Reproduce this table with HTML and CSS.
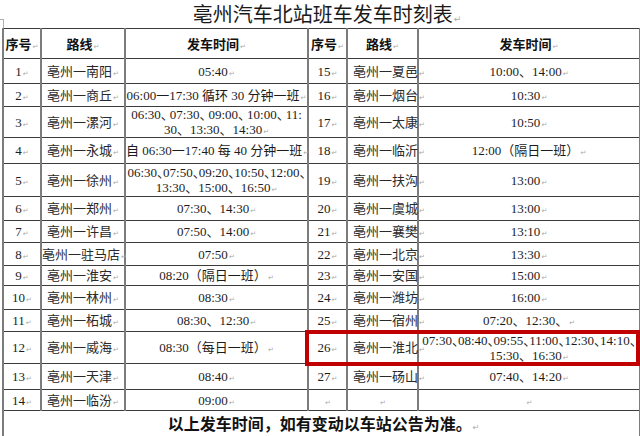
FILE: index.html
```html
<!DOCTYPE html>
<html lang="zh-CN">
<head>
<meta charset="utf-8">
<title>亳州汽车北站班车发车时刻表</title>
<link rel="stylesheet" href="styles.css">
</head>
<body>
<div class="page">
  <h1 class="title">亳州汽车北站班车发车时刻表<span class="pm">↵</span></h1>
  <div class="tablewrap">
    <table class="sched">
      <colgroup>
        <col class="w1"><col class="w2"><col class="w3"><col class="w4"><col class="w5"><col class="w6">
      </colgroup>
      <tr class="head">
        <th>序号<span class="pm">↵</span></th><th>路线<span class="pm">↵</span></th><th>发车时间<span class="pm">↵</span></th>
        <th>序号<span class="pm">↵</span></th><th>路线<span class="pm">↵</span></th><th>发车时间<span class="pm">↵</span></th>
      </tr>
      <tr>
        <td>1<span class="pm">↵</span></td><td class="rt">亳州一南阳<span class="pm">↵</span></td><td>05:40<span class="pm">↵</span></td>
        <td>15<span class="pm">↵</span></td><td class="rt rr">亳州一夏邑<span class="pm">↵</span></td><td>10:00、14:00<span class="pm">↵</span></td>
      </tr>
      <tr>
        <td>2<span class="pm">↵</span></td><td class="rt">亳州一商丘<span class="pm">↵</span></td><td>06:00一17:30 循环 30 分钟一班<span class="pm">↵</span></td>
        <td>16<span class="pm">↵</span></td><td class="rt rr">亳州一烟台<span class="pm">↵</span></td><td>10:30<span class="pm">↵</span></td>
      </tr>
      <tr>
        <td>3<span class="pm">↵</span></td><td class="rt">亳州一漯河<span class="pm">↵</span></td><td>06:30<span class="n2">、</span>07:30<span class="n2">、</span>09:00<span class="n2">、</span>10:00<span class="n2">、</span>11:<br>30、13:30、14:30<span class="pm">↵</span></td>
        <td>17<span class="pm">↵</span></td><td class="rt rr">亳州一太康<span class="pm">↵</span></td><td>10:50<span class="pm">↵</span></td>
      </tr>
      <tr>
        <td>4<span class="pm">↵</span></td><td class="rt">亳州一永城<span class="pm">↵</span></td><td>自 06:30一17:40 每 40 分钟一班<span class="pm">↵</span></td>
        <td>18<span class="pm">↵</span></td><td class="rt rr">亳州一临沂<span class="pm">↵</span></td><td>12:00（隔日一班）<span class="pm">↵</span></td>
      </tr>
      <tr>
        <td>5<span class="pm">↵</span></td><td class="rt">亳州一徐州<span class="pm">↵</span></td><td>06:30<span class="n1">、</span>07:50<span class="n1">、</span>09:20<span class="n1">、</span>10:50<span class="n1">、</span>12:00<span class="n1">、</span><br>13:30、15:00、16:50<span class="pm">↵</span></td>
        <td>19<span class="pm">↵</span></td><td class="rt rr">亳州一扶沟<span class="pm">↵</span></td><td>13:00<span class="pm">↵</span></td>
      </tr>
      <tr>
        <td>6<span class="pm">↵</span></td><td class="rt">亳州一郑州<span class="pm">↵</span></td><td>07:30、14:30<span class="pm">↵</span></td>
        <td>20<span class="pm">↵</span></td><td class="rt rr">亳州一虞城<span class="pm">↵</span></td><td>13:00<span class="pm">↵</span></td>
      </tr>
      <tr>
        <td>7<span class="pm">↵</span></td><td class="rt">亳州一许昌<span class="pm">↵</span></td><td>07:50、14:00<span class="pm">↵</span></td>
        <td>21<span class="pm">↵</span></td><td class="rt rr">亳州一襄樊<span class="pm">↵</span></td><td>13:10<span class="pm">↵</span></td>
      </tr>
      <tr>
        <td>8<span class="pm">↵</span></td><td class="rt">亳州一驻马店<span class="pm">↵</span></td><td>07:50<span class="pm">↵</span></td>
        <td>22<span class="pm">↵</span></td><td class="rt rr">亳州一北京<span class="pm">↵</span></td><td>13:30<span class="pm">↵</span></td>
      </tr>
      <tr>
        <td>9<span class="pm">↵</span></td><td class="rt">亳州一淮安<span class="pm">↵</span></td><td>08:20（隔日一班）<span class="pm">↵</span></td>
        <td>23<span class="pm">↵</span></td><td class="rt rr">亳州一安国<span class="pm">↵</span></td><td>15:00<span class="pm">↵</span></td>
      </tr>
      <tr>
        <td>10<span class="pm">↵</span></td><td class="rt">亳州一林州<span class="pm">↵</span></td><td>08:30<span class="pm">↵</span></td>
        <td>24<span class="pm">↵</span></td><td class="rt rr">亳州一潍坊<span class="pm">↵</span></td><td>16:00<span class="pm">↵</span></td>
      </tr>
      <tr>
        <td>11<span class="pm">↵</span></td><td class="rt">亳州一柘城<span class="pm">↵</span></td><td>08:30、12:30<span class="pm">↵</span></td>
        <td>25<span class="pm">↵</span></td><td class="rt rr">亳州一宿州<span class="pm">↵</span></td><td>07:20、12:30、<span class="pm">↵</span></td>
      </tr>
      <tr>
        <td>12<span class="pm">↵</span></td><td class="rt">亳州一威海<span class="pm">↵</span></td><td>08:30（每日一班）<span class="pm">↵</span></td>
        <td>26<span class="pm">↵</span></td><td class="rt rr">亳州一淮北<span class="pm">↵</span></td><td>07:30<span class="n1">、</span>08:40<span class="n1">、</span>09:55<span class="n1">、</span>11:00<span class="n1">、</span>12:30<span class="n1">、</span>14:10<span class="n1">、</span><br>15:30、16:30<span class="pm">↵</span></td>
      </tr>
      <tr>
        <td>13<span class="pm">↵</span></td><td class="rt">亳州一天津<span class="pm">↵</span></td><td>08:40<span class="pm">↵</span></td>
        <td>27<span class="pm">↵</span></td><td class="rt rr">亳州一砀山<span class="pm">↵</span></td><td>07:40、14:20<span class="pm">↵</span></td>
      </tr>
      <tr>
        <td>14<span class="pm">↵</span></td><td class="rt">亳州一临汾<span class="pm">↵</span></td><td>09:00<span class="pm">↵</span></td>
        <td><span class="pm">↵</span></td><td><span class="pm">↵</span></td><td><span class="pm">↵</span></td>
      </tr>
      <tr class="foot">
        <td colspan="6">以上发车时间，如有变动以车站公告为准。<span class="pm">↵</span></td>
      </tr>
    </table>
    <div class="highlight"></div>
  </div>
</div>
</body>
</html>
```
FILE: styles.css
```css
* { box-sizing: border-box; }
html, body { margin: 0; padding: 0; background: #fff; }
body {
  width: 640px;
  height: 436px;
  overflow: hidden;
  font-family: "Liberation Serif", "Noto Sans CJK SC", serif;
  color: #1c1c1c;
}
.page { position: relative; }
.page::before {
  content: "";
  position: absolute;
  left: 0;
  top: 19px;
  width: 3px;
  height: 9px;
  border-top: 1px solid #b0b0b0;
  border-right: 1px solid #b0b0b0;
}
.title {
  margin: 0;
  height: 28px;
  padding-left: 14px;
  font: 400 20px/28px "Noto Sans CJK SC", sans-serif;
  text-align: center;
  color: #1a1a1a;
}
.title .pm { font-size: 9px; }
.tablewrap { position: relative; margin-left: 2px; width: 637px; }
.sched {
  width: 637px;
  border-collapse: collapse;
  table-layout: fixed;
}
.w1 { width: 38px; }
.w2 { width: 84px; }
.w3 { width: 183px; }
.w4 { width: 39px; }
.w5 { width: 71px; }
.w6 { width: 222px; }
.sched th, .sched td {
  padding: 0;
  text-align: center;
  vertical-align: middle;
  font-size: 13px;
  line-height: 15px;
  white-space: nowrap;
  border-top: 1px solid #3c3c3c;
  border-bottom: 1px solid #3c3c3c;
  border-left: 2px solid #7c7c7c;
  border-right: 2px solid #7c7c7c;
}
.sched th {
  font-family: "Noto Sans CJK SC", sans-serif;
  font-weight: 700;
  color: #111;
}
.rt { font-size: 12.5px; color: #2a2a2a; }
.sched td.rr { text-align: left; padding-left: 5px; }
.pm {
  font-family: "DejaVu Sans", sans-serif;
  font-size: 7px;
  line-height: 1;
  font-weight: 400;
  color: #a8a8a8;
  margin-left: 1px;
}
.n1 { margin-right: -7px; }
.n2 { margin-right: -4px; }
.sched tr:nth-child(1) { height: 30px; }
.sched tr:nth-child(2) { height: 25px; }
.sched tr:nth-child(3) { height: 23px; }
.sched tr:nth-child(4) { height: 31px; }
.sched tr:nth-child(5) { height: 26px; }
.sched tr:nth-child(6) { height: 33px; }
.sched tr:nth-child(7) { height: 24px; }
.sched tr:nth-child(8) { height: 22px; }
.sched tr:nth-child(9) { height: 23px; }
.sched tr:nth-child(10) { height: 20px; }
.sched tr:nth-child(11) { height: 24px; }
.sched tr:nth-child(12) { height: 22px; }
.sched tr:nth-child(13) { height: 32px; }
.sched tr:nth-child(14) { height: 26px; }
.sched tr:nth-child(15) { height: 21px; }
.sched tr.foot { height: 32px; }
.foot td {
  font-family: "Noto Sans CJK SC", sans-serif;
  font-size: 16px;
  font-weight: 700;
  color: #111;
  padding-left: 4px;
}
.sched .foot td { line-height: 22px; vertical-align: top; padding-top: 1px; }
.foot .pm { font-size: 8px; }
.highlight {
  position: absolute;
  left: 303px;
  top: 302px;
  width: 335px;
  height: 36px;
  border: 4px solid #c00000;
  pointer-events: none;
}
```
